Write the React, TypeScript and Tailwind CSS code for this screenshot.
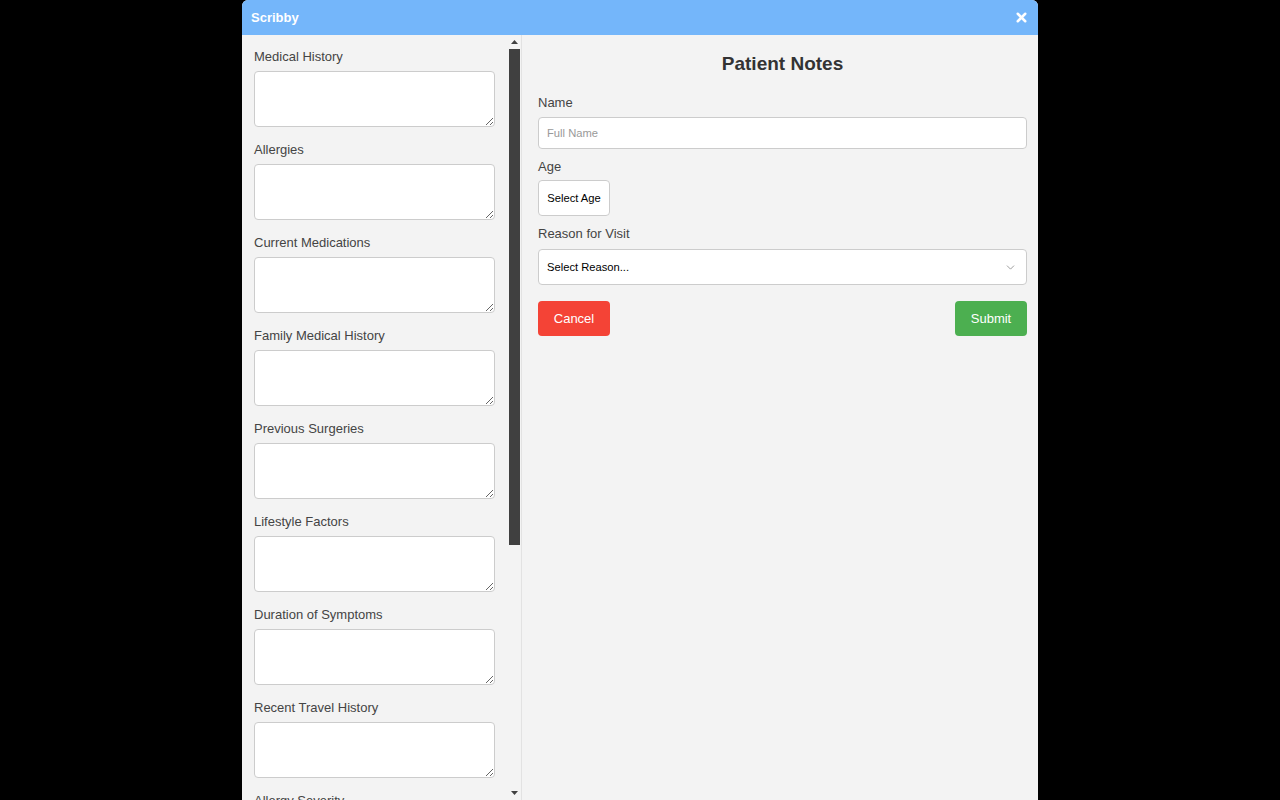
import { X, ChevronDown } from 'lucide-react';

const historyFields = [
  'Medical History',
  'Allergies',
  'Current Medications',
  'Family Medical History',
  'Previous Surgeries',
  'Lifestyle Factors',
  'Duration of Symptoms',
  'Recent Travel History',
  'Allergy Severity',
  'Immunization History',
  'Mental Health History',
  'Additional Notes',
];

function HistoryField({ label }: { label: string }) {
  return (
    <div className="mb-[15px]">
      <label className="block text-[13px] leading-[15px] text-[#444] mb-[7px]">{label}</label>
      <textarea className="block w-full h-[56px] bg-white border border-[#ccc] rounded-[4px] p-1.5 text-[13px] resize-y" />
    </div>
  );
}

// classic scrollbar look: arrows + dark thumb
function FakeScrollbar() {
  return (
    <div className="w-[14px] shrink-0 flex flex-col items-start pl-[2px]">
      <div className="h-[14px] w-[11px] flex items-center justify-center">
        <svg width="7" height="4" viewBox="0 0 7 4"><path d="M3.5 0L7 4H0z" fill="#404040" /></svg>
      </div>
      <div className="w-[11px] h-[496px] bg-[#404040]" />
      <div className="flex-1" />
      <div className="h-[14px] w-[11px] flex items-center justify-center">
        <svg width="7" height="4" viewBox="0 0 7 4"><path d="M0 0H7L3.5 4z" fill="#404040" /></svg>
      </div>
    </div>
  );
}

export default function App() {
  return (
    <div className="w-full h-[800px] bg-black flex justify-center font-['Liberation_Sans',Arial,sans-serif]">
      <div className="w-[796px] h-full flex flex-col bg-[#f3f3f3] rounded-t-[6px] overflow-hidden">
        {/* Header */}
        <div className="h-[35px] shrink-0 bg-[#74b6fa] flex items-center justify-between pl-[9px] pr-[9px]">
          <span className="text-white font-bold text-[13px]">Scribby</span>
          <X size={15} strokeWidth={4} className="text-white" />
        </div>

        <div className="flex flex-1 min-h-0">
          {/* Left history panel */}
          <div className="w-[280px] shrink-0 flex border-r border-[#e2e2e2]">
            <div className="flex-1 overflow-hidden pl-3 pr-3 pt-[14px]">
              {historyFields.map((f) => (
                <HistoryField key={f} label={f} />
              ))}
            </div>
            <FakeScrollbar />
          </div>

          {/* Right form */}
          <div className="flex-1 pl-4 pr-[11px] pt-4">
            <h1 className="text-center text-[19px] leading-[26px] font-bold text-[#333] mb-[18px]">Patient Notes</h1>

            <label className="block text-[13px] leading-[15px] text-[#444] mb-[7px]">Name</label>
            <input
              placeholder="Full Name"
              className="block w-full h-[32px] bg-white border border-[#ccc] rounded-[4px] px-2 text-[11.2px] placeholder:text-[#999] mb-[10px]"
            />

            <label className="block text-[13px] leading-[15px] text-[#444] mb-[6px]">Age</label>
            <button className="block h-[36px] w-[72px] bg-white border border-[#ccc] rounded-[4px] text-[11.2px] text-black mb-[10px]">
              Select Age
            </button>

            <label className="block text-[13px] leading-[15px] text-[#444] mb-[8px]">Reason for Visit</label>
            <div className="relative h-[36px] bg-white border border-[#ccc] rounded-[4px] flex items-center px-2 text-[11.2px] text-black">
              <span>Select Reason...</span>
              <ChevronDown size={13} strokeWidth={1.5} className="absolute right-[9px] text-[#888]" />
            </div>

            <div className="flex justify-between mt-4">
              <button className="w-[72px] h-[35px] bg-[#f44336] text-white text-[13px] rounded-[4px]">Cancel</button>
              <button className="w-[72px] h-[35px] bg-[#4caf50] text-white text-[13px] rounded-[4px]">Submit</button>
            </div>
          </div>
        </div>
      </div>
    </div>
  );
}
